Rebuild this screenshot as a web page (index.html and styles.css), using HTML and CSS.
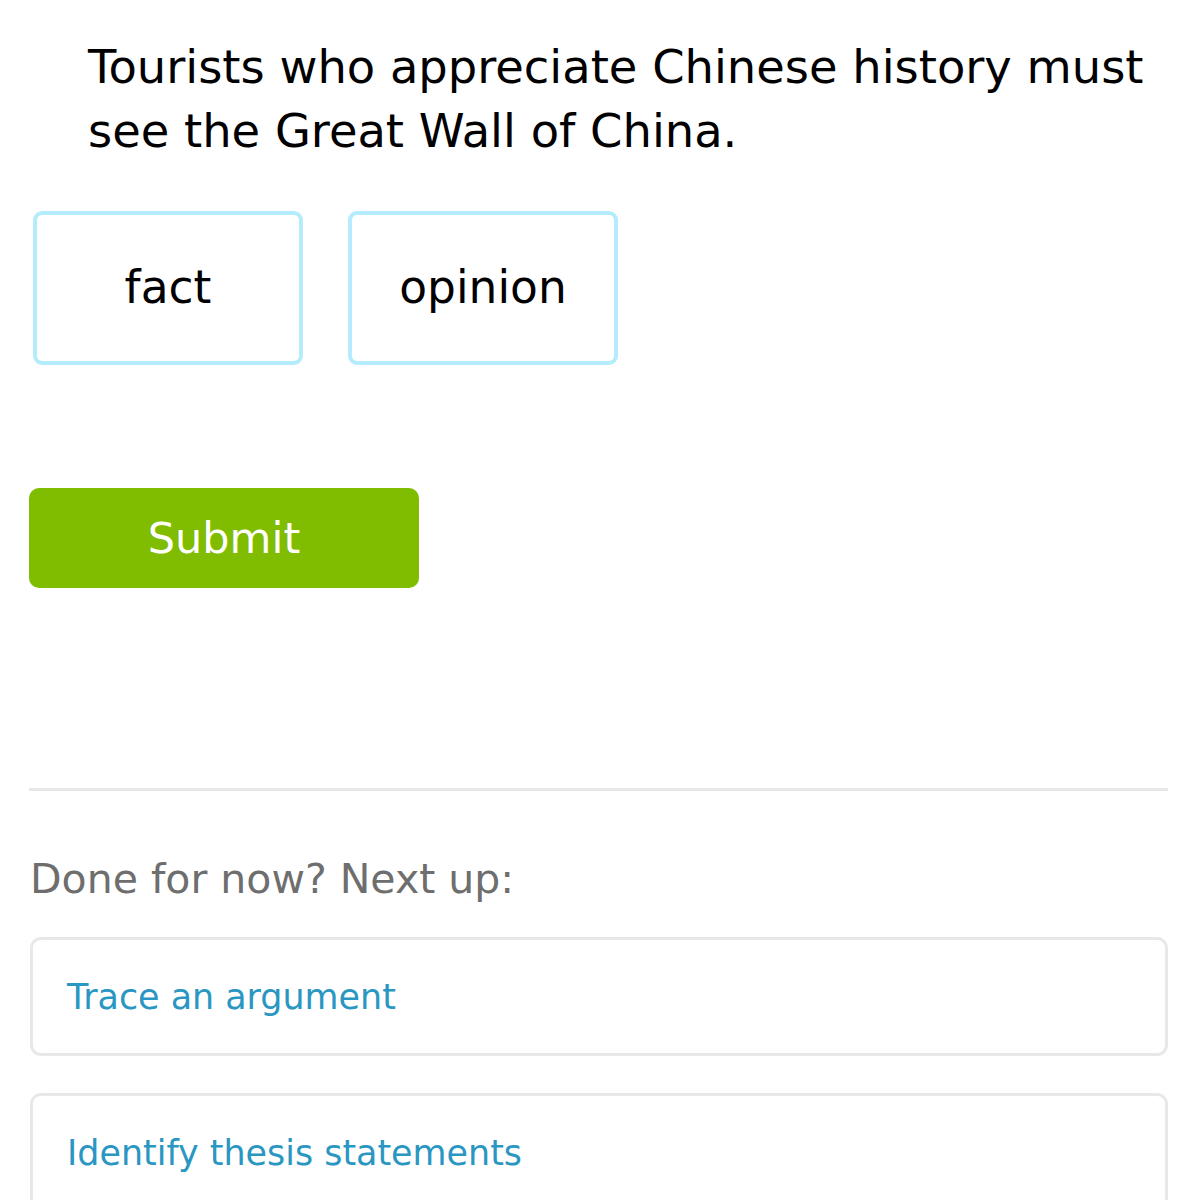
FILE: index.html
```html
<!DOCTYPE html>
<html lang="en">
<head>
<meta charset="utf-8">
<title>Fact or opinion</title>
<link rel="stylesheet" href="styles.css">
</head>
<body>
<main class="page">
  <p class="question">Tourists who appreciate Chinese history must see the Great Wall of China.</p>
  <div class="choices">
    <button class="choice" type="button">fact</button>
    <button class="choice" type="button">opinion</button>
  </div>
  <button class="submit" type="button">Submit</button>
  <hr class="divider">
  <p class="next-label">Done for now? Next up:</p>
  <a class="next-card" href="#">Trace an argument</a>
  <a class="next-card" href="#">Identify thesis statements</a>
</main>
</body>
</html>
```

FILE: styles.css
```css
html, body {
  margin: 0;
  padding: 0;
  background: #ffffff;
}

body {
  font-family: "DejaVu Sans", Verdana, sans-serif;
  color: #000000;
  overflow: hidden;
}

.page {
  padding: 35px 31px 0 29px;
  display: flex;
  flex-direction: column;
  align-items: flex-start;
}

.question {
  margin: 0 0 48px 59px;
  font-size: 46.4px;
  line-height: 64px;
  max-width: 1090px;
}

.choices {
  display: flex;
  gap: 45px;
  margin-left: 4px;
}

.choice {
  box-sizing: border-box;
  width: 270px;
  height: 154px;
  border: 4px solid #b5ecfb;
  border-radius: 9px;
  background: #ffffff;
  font-family: "DejaVu Sans", Verdana, sans-serif;
  font-size: 45.5px;
  color: #000000;
  padding: 0 0 2px 0;
}

.submit {
  margin-top: 123px;
  width: 390px;
  height: 100px;
  border: none;
  border-radius: 10px;
  background: #80bc00;
  color: #ffffff;
  font-family: "DejaVu Sans", Verdana, sans-serif;
  font-size: 43px;
  padding: 0;
}

.divider {
  align-self: stretch;
  margin: 200px 0 0 0;
  border: none;
  height: 3px;
  background: #e8e8e8;
}

.next-label {
  margin: 64px 0 0 1px;
  font-size: 41px;
  line-height: 48px;
  color: #6e6e6e;
}

.next-card {
  box-sizing: border-box;
  align-self: stretch;
  margin: 34px 0 0 1px;
  display: block;
  border: 3px solid #e8e8e8;
  border-radius: 11px;
  padding: 37px 34px 35px;
  font-size: 34.9px;
  line-height: 41px;
  color: #2a96c2;
  text-decoration: none;
}

.next-card + .next-card {
  margin-top: 37px;
}
```
